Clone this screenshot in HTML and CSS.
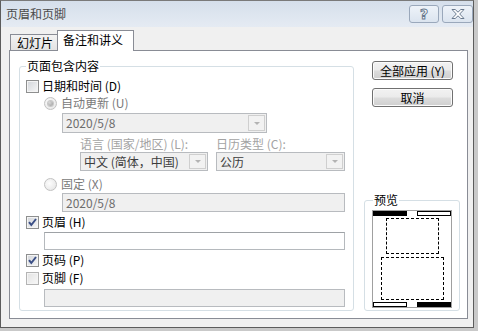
FILE: index.html
```html
<!DOCTYPE html>
<html lang="zh-CN">
<head>
<meta charset="utf-8">
<title>页眉和页脚</title>
<link rel="stylesheet" href="styles.css">
</head>
<body>
<div class="window">
  <div class="titlebar">
    <span class="title">页眉和页脚</span>
    <div class="tbtns">
      <span class="tbtn help">?</span>
      <span class="tbtn close"><svg width="14" height="10" viewBox="0 0 14 10"><polygon points="1,0.5 4.2,0.5 7,3.2 9.8,0.5 13,0.5 8.7,5 13,9.5 9.8,9.5 7,6.8 4.2,9.5 1,9.5 5.3,5" fill="#fff" stroke="#6a7a8f" stroke-width="1"/></svg></span>
    </div>
  </div>
  <div class="client">
    <div class="tabs">
      <div class="tab">幻灯片</div>
      <div class="tab active">备注和讲义</div>
    </div>
    <div class="panel">
      <div class="group main">
        <div class="legend">页面包含内容</div>
        <div class="row r-date"><span class="cb"></span><span>日期和时间 (<u>D</u>)</span></div>
        <div class="row ind r-auto"><span class="radio on"></span><span class="dis">自动更新 (<u>U</u>)</span></div>
        <div class="field disabled date1"><span class="val">2020/5/8</span><span class="drop"><span class="arrow"></span></span></div>
        <div class="langgrid">
          <span class="lbl">语言 (国家/地区) (<u>L</u>):</span>
          <span class="lbl">日历类型 (<u>C</u>):</span>
          <div class="field disabled combo"><span class="val dark">中文 (简体，中国)</span><span class="drop"><span class="arrow"></span></span></div>
          <div class="field disabled combo"><span class="val dark">公历</span><span class="drop"><span class="arrow"></span></span></div>
        </div>
        <div class="row ind r-fixed"><span class="radio"></span><span class="dis">固定 (<u>X</u>)</span></div>
        <div class="field disabled date2"><span class="val">2020/5/8</span></div>
        <div class="row r-header"><span class="cb"><svg width="11" height="11" viewBox="0 0 11 11"><path d="M2 5.2 L4.3 8 L9 2" fill="none" stroke="#3b4f86" stroke-width="2"/></svg></span><span>页眉 (<u>H</u>)</span></div>
        <div class="field text1"></div>
        <div class="row r-page"><span class="cb"><svg width="11" height="11" viewBox="0 0 11 11"><path d="M2 5.2 L4.3 8 L9 2" fill="none" stroke="#3b4f86" stroke-width="2"/></svg></span><span>页码 (<u>P</u>)</span></div>
        <div class="row r-footer"><span class="cb light"></span><span>页脚 (<u>F</u>)</span></div>
        <div class="field disabled text2"></div>
      </div>
      <div class="side">
        <button class="btn">全部应用 (<u>Y</u>)</button>
        <button class="btn second">取消</button>
        <div class="group preview">
          <div class="legend">预览</div>
          <div class="page">
            <span class="bar tl"></span>
            <span class="bar tr"></span>
            <span class="dash d1"></span>
            <span class="dash d2"></span>
            <span class="bar bl"></span>
            <span class="bar br"></span>
          </div>
        </div>
      </div>
    </div>
  </div>
</div>
</body>
</html>
```
FILE: styles.css
```css
* { box-sizing: border-box; }
html, body { margin: 0; padding: 0; }
body {
  width: 478px;
  height: 331px;
  overflow: hidden;
  background: #c9c9c9;
  font-family: "Noto Sans CJK SC", "Liberation Sans", sans-serif;
  font-size: 12px;
  color: #000;
}
u { text-decoration: none; }

.window {
  width: 474px;
  height: 328px;
  background: #f0f0f0;
  border: 1px solid #5c5c5c;
  border-top-color: #7a7a7a;
  display: flex;
  flex-direction: column;
}

.titlebar {
  height: 26px;
  flex: none;
  display: flex;
  align-items: flex-start;
  justify-content: space-between;
  background: linear-gradient(#d5dfeb, #e5ebf3);
  padding-left: 5px;
}
.title {
  line-height: 26px;
  color: #4a4a4a;
}
.tbtns {
  display: flex;
  gap: 3px;
  margin-top: 4px;
}
.tbtn {
  height: 18px;
  border: 1px solid #9aa8bb;
  border-radius: 3px;
  background: linear-gradient(#eef3f9, #dbe4ef);
  display: flex;
  align-items: center;
  justify-content: center;
}
.help {
  width: 30px;
  font-family: "DejaVu Sans", sans-serif;
  font-weight: bold;
  font-size: 14px;
  line-height: 16px;
  color: #fff;
  -webkit-text-stroke: 1px #6a7a8f;
}
.close { width: 31px; }

.client {
  flex: 1;
  padding: 4px 0 0 8px;
}
.tabs {
  display: flex;
  align-items: flex-end;
  height: 20px;
  margin-left: 1px;
  position: relative;
  z-index: 1;
  margin-bottom: -1px;
}
.tab {
  height: 17px;
  line-height: 16px;
  padding: 0 0 0 6px;
  white-space: nowrap;
  border: 1px solid #898c95;
  border-right: none;
  border-bottom: 1px solid #898c95;
  background: linear-gradient(#f3f3f3, #e3e3e3);
  width: 47px;
}
.tab.active {
  height: 21px;
  width: 77px;
  padding-left: 5px;
  line-height: 17px;
  border-right: 1px solid #898c95;
  border-bottom: none;
  background: #fff;
}

.panel {
  width: 459px;
  height: 269px;
  border: 1px solid #898c95;
  background: #fff;
  display: flex;
  align-items: flex-start;
  padding-left: 9px;
}

.group {
  border: 1px solid #d5dfe5;
  border-radius: 3px;
}
.legend {
  width: fit-content;
  background: #fff;
  line-height: 14px;
  margin-top: -8px;
  padding: 0 1px;
}
.main {
  width: 335px;
  height: 245px;
  margin-top: 15px;
  padding: 0 6px 0 6px;
}
.main > .legend { margin-left: 0; }

.row {
  display: flex;
  align-items: center;
  height: 16px;
  line-height: 16px;
  white-space: nowrap;
}
.ind { margin-left: 18px; }
.dis { color: #7a7a7a; }

.cb {
  width: 13px;
  height: 13px;
  flex: none;
  margin-right: 3px;
  border: 1px solid #8e8f8f;
  background: linear-gradient(135deg, #d2d5da, #f7f7f7);
  box-shadow: inset 0 0 0 1px #f4f4f4;
  display: flex;
  align-items: center;
  justify-content: center;
}
.cb.light {
  border-color: #b4b4b4;
  background: linear-gradient(135deg, #e2e2e2, #f8f8f8);
}
.radio {
  width: 13px;
  height: 13px;
  flex: none;
  margin-right: 4px;
  border: 1px solid #c2c2c2;
  border-radius: 50%;
  background: radial-gradient(circle at 40% 40%, #fdfdfd, #e2e2e2);
  display: flex;
  align-items: center;
  justify-content: center;
}
.radio.on::after {
  content: "";
  width: 5px;
  height: 5px;
  border-radius: 50%;
  background: radial-gradient(circle at 35% 35%, #d8d8d8, #9a9a9a);
  box-shadow: 0 0 0 1px #c8c8c8;
}

.r-date { margin-top: 5px; }
.r-auto { margin-top: 1px; }

.field {
  display: flex;
  align-items: center;
  border: 1px solid #b5b9bd;
  border-top-color: #9ea2a6;
  background: #fff;
}
.field.disabled {
  background: #f0f0f0;
  border-color: #b8bbbf;
}
.val {
  flex: 1;
  padding-left: 3px;
  line-height: 16px;
  color: #6d6d6d;
  white-space: nowrap;
  overflow: hidden;
}
.val.dark { color: #3c3c3c; }
.drop {
  width: 17px;
  height: calc(100% - 2px);
  margin-right: 1px;
  border: 1px solid #cfcfcf;
  background: #f2f2f2;
  display: flex;
  align-items: center;
  justify-content: center;
}
.arrow {
  width: 0;
  height: 0;
  border-left: 3px solid transparent;
  border-right: 3px solid transparent;
  border-top: 3px solid #b3b3b3;
}

.date1 {
  margin: 2px 0 0 36px;
  width: 205px;
  height: 20px;
}
.langgrid {
  display: grid;
  grid-template-columns: 128px 129px;
  grid-template-rows: 14px 19px;
  column-gap: 8px;
  row-gap: 1px;
  margin: 4px 0 0 54px;
}
.lbl {
  line-height: 14px;
  color: #a3a3a3;
  white-space: nowrap;
}
.combo { height: 19px; }
.r-fixed { margin-top: 5px; }
.date2 {
  margin: 1px 0 0 36px;
  width: 283px;
  height: 19px;
}
.r-header { margin-top: 2px; }
.text1 {
  margin: 2px 0 0 18px;
  width: 301px;
  height: 18px;
}
.r-page { margin-top: 2px; }
.r-footer { margin-top: 2px; }
.text2 {
  margin: 3px 0 0 18px;
  width: 301px;
  height: 18px;
}

.side {
  margin-left: 10px;
  margin-top: 10px;
  width: 96px;
  display: flex;
  flex-direction: column;
}
.btn {
  margin-left: 8px;
  width: 81px;
  height: 19px;
  padding: 0;
  font: inherit;
  line-height: 16px;
  color: #000;
  border: 1px solid #707070;
  border-radius: 3px;
  background: linear-gradient(#f2f2f2 0%, #ebebeb 48%, #dddddd 52%, #cfcfcf 100%);
  box-shadow: inset 0 0 0 1px #fbfbfb;
}
.btn.second { margin-top: 8px; }

.preview {
  margin-top: 93px;
  width: 96px;
  height: 111px;
  padding-left: 7px;
}
.preview > .legend { margin-left: 1px; }
.page {
  position: relative;
  margin-top: 3px;
  width: 80px;
  height: 98px;
  border: 1px solid #a0a0a0;
  background: #fff;
}
.bar {
  position: absolute;
  width: 34px;
  height: 5px;
  border: 1px solid #000;
  background: #fff;
}
.bar.tl { left: 0; top: 0; background: #000; }
.bar.tr { left: 44px; top: 0; }
.bar.bl { left: 0; bottom: 0; }
.bar.br { left: 44px; bottom: 0; background: #000; }
.dash {
  position: absolute;
  border: 1px dashed #000;
}
.d1 { left: 13px; top: 7px; width: 53px; height: 36px; }
.d2 { left: 8px; top: 46px; width: 63px; height: 43px; }
```
